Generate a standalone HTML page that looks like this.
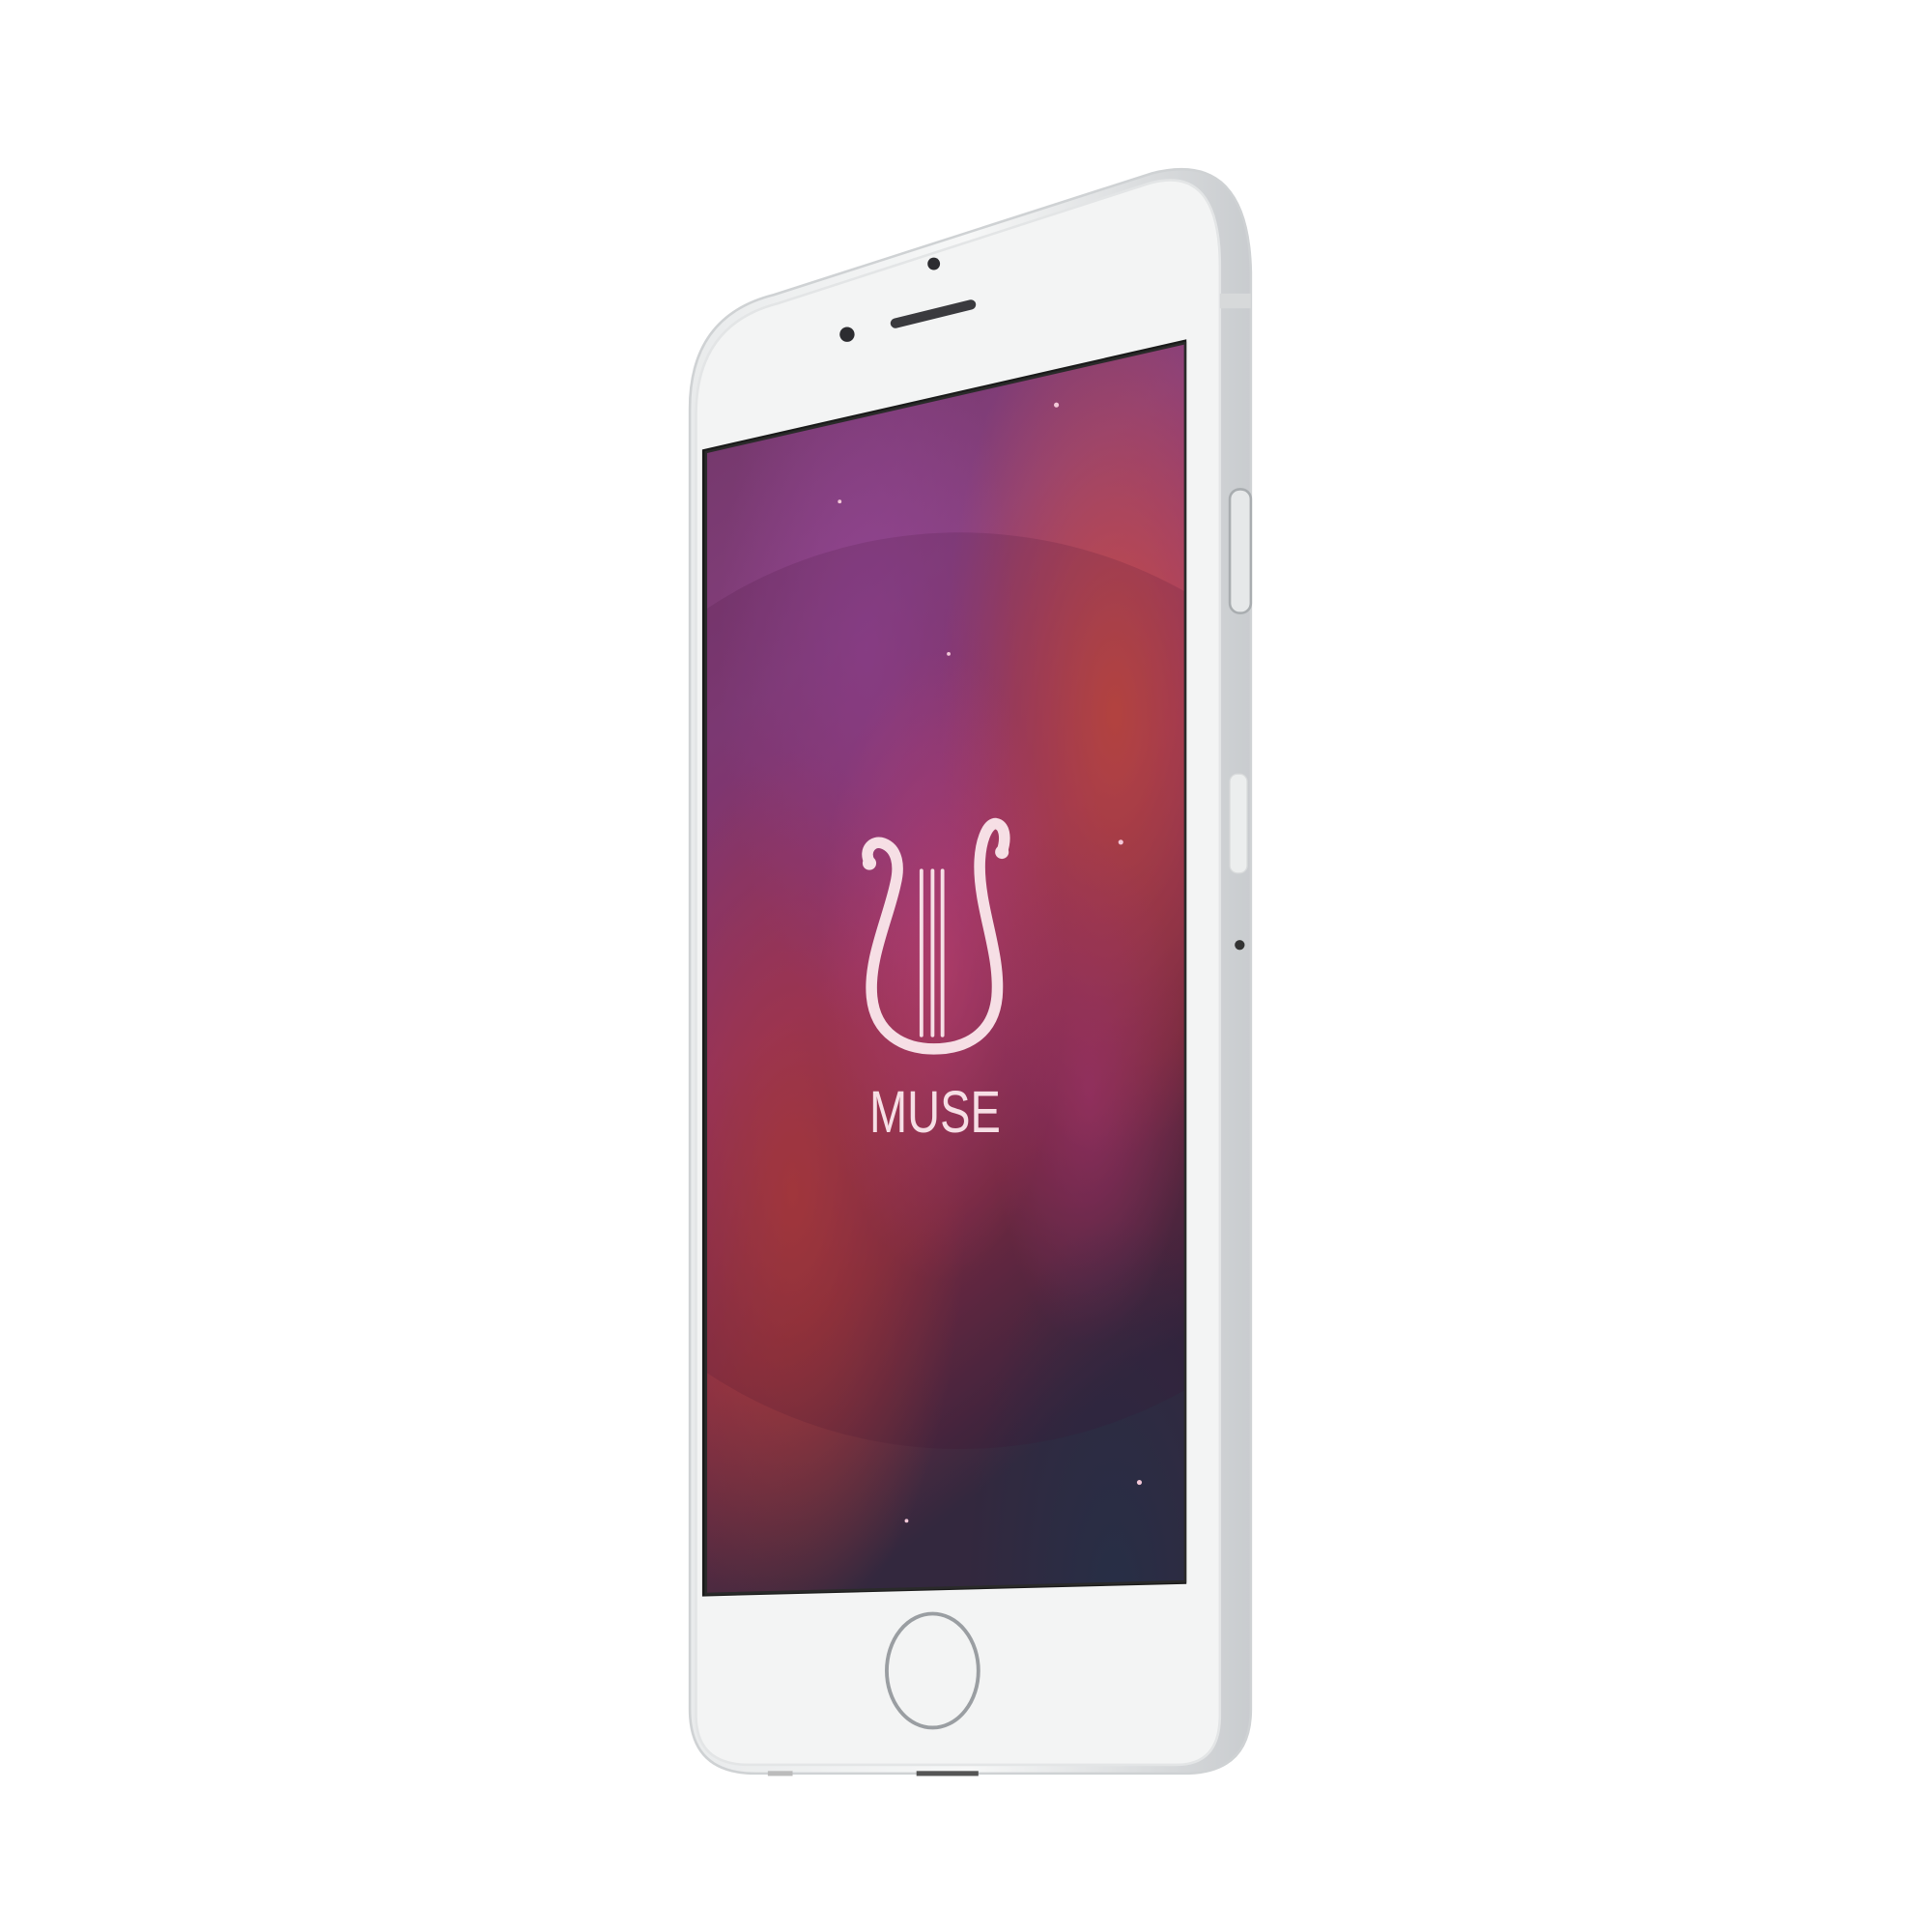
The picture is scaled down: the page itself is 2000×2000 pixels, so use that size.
<!DOCTYPE html>
<html><head><meta charset="utf-8"><style>html,body{margin:0;padding:0;background:#fff;width:2000px;height:2000px;overflow:hidden}</style></head>
<body>
<svg width="2000" height="2000" viewBox="0 0 1560 1560" xmlns="http://www.w3.org/2000/svg">
<defs>
<linearGradient id="edge" x1="0" x2="1" y1="0" y2="0">
<stop offset="0" stop-color="#e9ebec"/><stop offset="0.5" stop-color="#f6f7f7"/><stop offset="1" stop-color="#c9cccf"/>
</linearGradient>
<linearGradient id="bg" x1="0" y1="0" x2="0.3" y2="1">
<stop offset="0" stop-color="#6e3566"/><stop offset="0.3" stop-color="#87407e"/><stop offset="0.55" stop-color="#9c3670"/><stop offset="0.78" stop-color="#7c2d45"/><stop offset="1" stop-color="#33283e"/>
</linearGradient>
<radialGradient id="r1" cx="0.85" cy="0.3" r="0.35"><stop offset="0" stop-color="#d0503a" stop-opacity="0.85"/><stop offset="1" stop-color="#d0503a" stop-opacity="0"/></radialGradient>
<radialGradient id="r2" cx="0.2" cy="0.68" r="0.35"><stop offset="0" stop-color="#c04236" stop-opacity="0.75"/><stop offset="1" stop-color="#c04236" stop-opacity="0"/></radialGradient>
<radialGradient id="r3" cx="0.35" cy="0.25" r="0.3"><stop offset="0" stop-color="#9a4aa0" stop-opacity="0.6"/><stop offset="1" stop-color="#9a4aa0" stop-opacity="0"/></radialGradient>
<radialGradient id="r4" cx="0.5" cy="0.5" r="0.25"><stop offset="0" stop-color="#e0507a" stop-opacity="0.55"/><stop offset="1" stop-color="#e0507a" stop-opacity="0"/></radialGradient>
<radialGradient id="r5" cx="0.85" cy="1" r="0.3"><stop offset="0" stop-color="#243048" stop-opacity="0.8"/><stop offset="1" stop-color="#243048" stop-opacity="0"/></radialGradient>
<radialGradient id="r6" cx="0.8" cy="0.6" r="0.2"><stop offset="0" stop-color="#b03a7a" stop-opacity="0.6"/><stop offset="1" stop-color="#b03a7a" stop-opacity="0"/></radialGradient>
<clipPath id="scr"><polygon points="570,365 957,277 957,1277 570,1287"/></clipPath>
</defs>
<path d="M557,330 Q557,255 625,238 L930,140 Q1008,120 1010,220 L1010,1380 Q1010,1430 960,1432 L610,1432 Q557,1432 557,1380 Z" fill="url(#edge)" stroke="#cfd2d4" stroke-width="2"/>
<path d="M562,335 Q562,262 628,245 L928,148 Q985,132 985,215 L985,1385 Q985,1425 950,1425 L605,1425 Q562,1425 562,1385 Z" fill="#f3f4f4" stroke="#e3e5e6" stroke-width="2"/>
<rect x="985" y="237" width="25" height="12" fill="#d7d9da"/>
<rect x="993" y="395" width="17" height="100" rx="8" fill="#e6e8e9" stroke="#a9adb0" stroke-width="2"/>
<rect x="993" y="625" width="14" height="80" rx="6" fill="#eceeee" stroke="#d8dadb" stroke-width="1"/>
<circle cx="1001" cy="763" r="4" fill="#333"/>
<polygon points="567,363 958,274 958,1279 567,1289" fill="#1a1a1a"/>
<g clip-path="url(#scr)">
<rect x="560" y="270" width="400" height="1020" fill="url(#bg)"/>
<rect x="560" y="270" width="400" height="1020" fill="url(#r1)"/>
<rect x="560" y="270" width="400" height="1020" fill="url(#r2)"/>
<rect x="560" y="270" width="400" height="1020" fill="url(#r3)"/>
<rect x="560" y="270" width="400" height="1020" fill="url(#r4)"/>
<rect x="560" y="270" width="400" height="1020" fill="url(#r6)"/>
<rect x="560" y="270" width="400" height="1020" fill="url(#r5)"/>
<circle cx="775" cy="800" r="370" fill="#3a1030" fill-opacity="0.15"/>
<g fill="#f3c8d8"><circle cx="853" cy="327" r="2"/><circle cx="678" cy="405" r="1.5"/><circle cx="766" cy="528" r="1.5"/><circle cx="905" cy="680" r="2"/><circle cx="920" cy="1197" r="2"/><circle cx="732" cy="1228" r="1.5"/></g>
</g>
<polygon points="570,365 957,277 957,1277 570,1287" fill="none" stroke="#2a2a2a" stroke-width="2"/>
<g fill="none" stroke="#f6dfe5" stroke-linecap="round">
<path d="M702,696 C697,686 705,678 713,681 C724,685 727,698 723,714 C717,742 701,775 704,805 C707,835 730,847 754,847 C780,847 802,835 805,805 C808,770 791,735 791,700 C791,680 797,665 804,665 C811,666 813,676 809,688" stroke-width="9"/>
<path d="M744,703 V836 M753,703 V836 M761,703 V836" stroke-width="3"/>
</g>
<circle cx="702" cy="697" r="5.5" fill="#f6dfe5"/><circle cx="809" cy="688" r="5.5" fill="#f6dfe5"/>
<text x="702" y="914" font-family="Liberation Sans, sans-serif" font-size="48" textLength="106" lengthAdjust="spacingAndGlyphs" fill="#f6dfe5">MUSE</text>
<circle cx="754" cy="213" r="5" fill="#2c2c30"/>
<circle cx="684" cy="270" r="6" fill="#2c2c30"/>
<line x1="723" y1="261" x2="784" y2="246" stroke="#3a3a3e" stroke-width="8" stroke-linecap="round"/>
<ellipse cx="753" cy="1349" rx="37" ry="46" fill="#f3f4f4" stroke="#9a9ea2" stroke-width="3"/>
<rect x="620" y="1430" width="20" height="4" fill="#bbb"/>
<rect x="740" y="1430" width="50" height="4" fill="#555"/>
</svg>
</body></html>
